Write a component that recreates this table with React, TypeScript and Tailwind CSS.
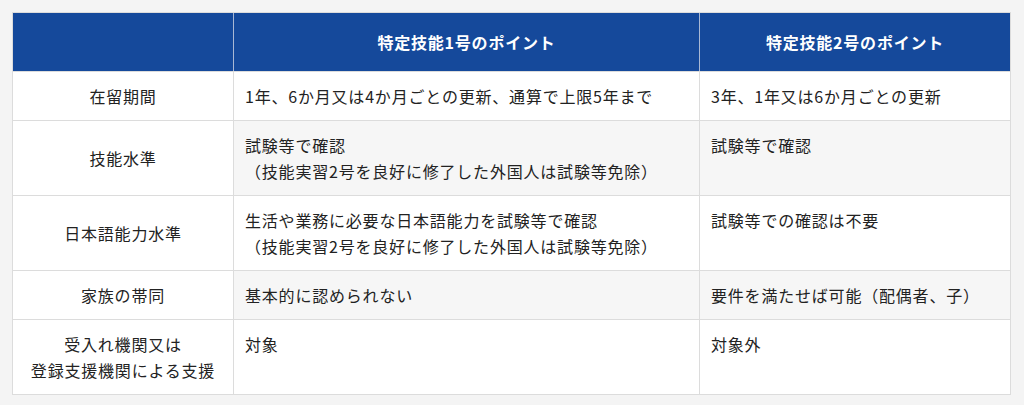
const rows: { label: string[]; a: string[]; b: string[] }[] = [
  {
    label: ["在留期間"],
    a: ["1年、6か月又は4か月ごとの更新、通算で上限5年まで"],
    b: ["3年、1年又は6か月ごとの更新"],
  },
  {
    label: ["技能水準"],
    a: ["試験等で確認", "（技能実習2号を良好に修了した外国人は試験等免除）"],
    b: ["試験等で確認"],
  },
  {
    label: ["日本語能力水準"],
    a: [
      "生活や業務に必要な日本語能力を試験等で確認",
      "（技能実習2号を良好に修了した外国人は試験等免除）",
    ],
    b: ["試験等での確認は不要"],
  },
  {
    label: ["家族の帯同"],
    a: ["基本的に認められない"],
    b: ["要件を満たせば可能（配偶者、子）"],
  },
  {
    label: ["受入れ機関又は", "登録支援機関による支援"],
    a: ["対象"],
    b: ["対象外"],
  },
];

const App = () => {
  return (
    <div
      className="w-[1024px] h-[405px] bg-[#f4f4f4] pt-[12px] pl-[12px] text-[16px] leading-[26px] tracking-[0.05em] text-[#222]"
      style={{ fontFamily: '"Noto Sans CJK JP", "Noto Sans", sans-serif' }}
    >
      <div className="w-[999px] border border-[#dcdcdc] bg-white grid grid-cols-[221px_466px_1fr]">
        {/* header */}
        <div className="bg-[#15499b] h-[58px] border-r border-[#a9b8d4]" />
        <div className="bg-[#15499b] h-[58px] border-r border-[#a9b8d4] flex items-center justify-center text-white font-bold">
          特定技能1号のポイント
        </div>
        <div className="bg-[#15499b] h-[58px] flex items-center justify-center text-white font-bold">
          特定技能2号のポイント
        </div>

        {rows.map((row, i) => {
          const stripe = i % 2 === 1 ? "bg-[#f6f6f6]" : "bg-white";
          return (
            <div key={i} className="contents">
              <div className="border-t border-r border-[#dcdcdc] bg-white flex flex-col items-center justify-center text-center py-[11px]">
                {row.label.map((t) => (
                  <span key={t}>{t}</span>
                ))}
              </div>
              <div className={`border-t border-r border-[#dcdcdc] ${stripe} px-[11px] py-[11px] flex flex-col`}>
                {row.a.map((t) => (
                  <span key={t}>{t}</span>
                ))}
              </div>
              <div className={`border-t border-[#dcdcdc] ${stripe} px-[11px] py-[11px] flex flex-col`}>
                {row.b.map((t) => (
                  <span key={t}>{t}</span>
                ))}
              </div>
            </div>
          );
        })}
      </div>
    </div>
  );
};

export default App;
